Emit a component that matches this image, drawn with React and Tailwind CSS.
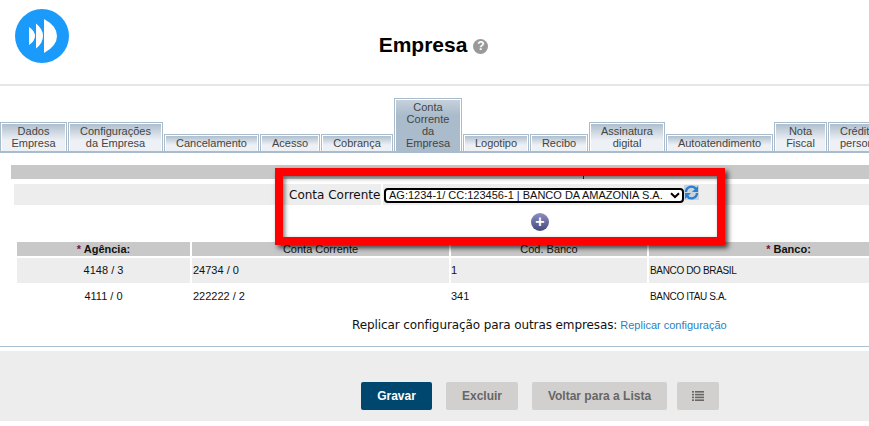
const sans = "font-['Liberation_Sans',Arial,sans-serif]";
const dejavu = "font-['DejaVu_Sans',Verdana,sans-serif]";

const tabs = [
  { label: ["Dados", "Empresa"], width: "w-[67px]" },
  { label: ["Configurações", "da Empresa"], width: "w-[95px]" },
  { label: ["Cancelamento"], width: "w-[95px]" },
  { label: ["Acesso"], width: "w-[60px]" },
  { label: ["Cobrança"], width: "w-[72px]" },
  { label: ["Conta", "Corrente", "da", "Empresa"], width: "w-[68px]", active: true },
  { label: ["Logotipo"], width: "w-[66px]" },
  { label: ["Recibo"], width: "w-[58px]" },
  { label: ["Assinatura", "digital"], width: "w-[76px]" },
  { label: ["Autoatendimento"], width: "w-[107px]" },
  { label: ["Nota", "Fiscal"], width: "w-[53px]" },
  { label: ["Crédito", "personalizado"], width: "w-[94px]", left: true },
];

const rows = [
  { agencia: "4148 / 3", conta: "24734 / 0", cod: "1", banco: "BANCO DO BRASIL", shaded: true },
  { agencia: "4111 / 0", conta: "222222 / 2", cod: "341", banco: "BANCO ITAU S.A." },
];

const gridCols = "grid w-[911px] grid-cols-[173px_257px_196px_279px] gap-x-[2px]";

function Logo() {
  return (
    <svg width="54" height="54" viewBox="0 0 54 54">
      <circle cx="27" cy="27" r="27" fill="#1a9bfc" />
      <path d="M29 10 Q42 17 42 27 Q42 37 29 44 Z" fill="#fff" />
      <path d="M21 14.5 Q28 20 28 27 Q28 34 21 39.5 Z" fill="#fff" />
      <path d="M14 18 Q20 22 20 27 Q20 32 14 36 Z" fill="#fff" />
    </svg>
  );
}

function Tab({ tab }) {
  return (
    <div className={`${tab.width} shrink-0 border border-b-0 border-[#a9bccd] p-px pb-0 ${sans}`}>
      <div
        className={`pb-[2px] pt-px text-[11px] leading-[12px] text-[#444] ${
          tab.left ? "pl-[10px] text-left" : "text-center"
        } ${
          tab.active
            ? "bg-gradient-to-b from-[#c6d1dc] to-[#aabbcb] to-[30%]"
            : "bg-gradient-to-b from-[#afbfce] to-[#edf0f4] to-[60%]"
        }`}
      >
        {tab.label.map((line) => (
          <div key={line} className="whitespace-nowrap">
            {line}
          </div>
        ))}
      </div>
    </div>
  );
}

export default function App() {
  return (
    <div className={`relative h-[426px] w-[869px] overflow-hidden bg-white ${sans}`}>
      <header className="relative flex h-[86px] items-start justify-center border-b-2 border-[#e6e6e6]">
        <div className="absolute left-[15px] top-[9px]">
          <Logo />
        </div>
        <div className="mr-[2px] mt-[33px] flex items-center gap-[6px]">
          <h1 className="text-[21px] font-bold leading-[24px] text-black">Empresa</h1>
          <span className="mt-[2px] flex h-[15px] w-[15px] items-center justify-center rounded-full bg-[#999] text-[12px] font-bold leading-none text-white">
            ?
          </span>
        </div>
      </header>

      <div className="flex h-[67px] items-end gap-[1px] border-b-2 border-[#a9bccd]">
        {tabs.map((tab) => (
          <Tab key={tab.label.join(" ")} tab={tab} />
        ))}
      </div>

      <div className="ml-[11px] mt-[12px] flex h-[14px] items-end bg-[#c8c8c8] pl-[572px]">
        <div className="h-[3px] w-px bg-[#222]" />
      </div>
      <div className="ml-[14px] mt-[5px] flex h-[21px] bg-[#ededed] pl-[275px]">
        <span className={`${dejavu} w-[92px] whitespace-nowrap pt-px text-[12px] leading-[21px] text-[#111]`}>
          Conta Corrente
        </span>
        <div className="h-full w-[2px] bg-white" />
        <div className="ml-px mt-[4px] flex h-[15px] w-[300px] items-center justify-between rounded-[4px] border-2 border-black bg-white pl-[3px] pr-[2px] text-[11px] text-[#111]">
          <span className="whitespace-nowrap">AG:1234-1/ CC:123456-1 | BANCO DA AMAZONIA S.A.</span>
          <svg width="10" height="7" viewBox="0 0 10 7">
            <path d="M1 1.2 L5 5 L9 1.2" fill="none" stroke="#000" strokeWidth="2" />
          </svg>
        </div>
        <svg className="mt-px" width="15" height="15" viewBox="0 0 15 15">
          <rect width="15" height="15" fill="#c9d3dc" />
          <path d="M2 7 A5.5 5.5 0 0 1 12 4" fill="none" stroke="#2a7fd0" strokeWidth="2.4" />
          <path d="M13 8 A5.5 5.5 0 0 1 3 11" fill="none" stroke="#2a7fd0" strokeWidth="2.4" />
          <path d="M14 1 V7 H8 Z M1 14 V8 H7 Z" fill="#2a7fd0" />
        </svg>
      </div>

      <div className="mt-[8px] flex justify-center pl-[211px]">
        <span className="flex h-[18px] w-[18px] items-center justify-center rounded-full bg-gradient-to-b from-[#8d8fc0] to-[#464a80] text-[16px] font-bold leading-none text-white">
          +
        </span>
      </div>

      <div className="ml-[17px] mt-[11px] text-[11px] text-[#111]">
        <div className={`${gridCols} h-[14px] leading-[14px]`}>
          <div className="bg-[#c8c8c8] text-center font-bold">
            <span className="text-[#7a1040]">*</span> Agência:
          </div>
          <div className="bg-[#c8c8c8] text-center">Conta Corrente</div>
          <div className="bg-[#c8c8c8] text-center">Cod. Banco</div>
          <div className="bg-[#c8c8c8] text-center font-bold">
            <span className="text-[#7a1040]">*</span> Banco:
          </div>
        </div>
        {rows.map((row) => (
          <div key={row.agencia} className={`${gridCols} mt-[2px] h-[24px] leading-[25px]`}>
            <div className={`text-center ${row.shaded ? "bg-[#ededed]" : ""}`}>{row.agencia}</div>
            <div className={`pl-px ${row.shaded ? "bg-[#ededed]" : ""}`}>{row.conta}</div>
            <div className={`${row.shaded ? "bg-[#ededed]" : ""}`}>{row.cod}</div>
            <div className={`pl-px text-[10px] tracking-[-0.35px] ${row.shaded ? "bg-[#ededed]" : ""}`}>{row.banco}</div>
          </div>
        ))}
      </div>

      <div className="mt-[9px] flex h-[16px] items-center pl-[352px]">
        <span className={`${dejavu} text-[12px] tracking-[-0.1px] text-[#111]`}>
          Replicar configuração para outras empresas:
        </span>
        <a className="ml-[3px] text-[11px] text-[#2a7fc4]">Replicar configuração</a>
      </div>

      <div className="mt-[13px] border-t border-[#a9bfd0] pt-[4px]">
        <div className="flex h-[70px] items-start gap-[14px] bg-[#ededed] pl-[361px] pt-[31px]">
          <button className="h-[28px] w-[71px] rounded-[2px] bg-[#00476f] text-[12px] font-bold text-white">
            Gravar
          </button>
          <button className="h-[28px] w-[72px] rounded-[2px] bg-[#d2d0cf] text-[12px] font-bold text-[#666]">
            Excluir
          </button>
          <button className="h-[28px] w-[135px] rounded-[2px] bg-[#d2d0cf] text-[12px] font-bold text-[#666]">
            Voltar para a Lista
          </button>
          <button className="-ml-[4px] flex h-[28px] w-[42px] items-center justify-center rounded-[2px] bg-[#d2d0cf]">
            <svg width="12" height="10" viewBox="0 0 12 10" fill="#666">
              <rect y="0" width="2" height="1.6" />
              <rect x="3" y="0" width="9" height="1.6" />
              <rect y="2.8" width="2" height="1.6" />
              <rect x="3" y="2.8" width="9" height="1.6" />
              <rect y="5.6" width="2" height="1.6" />
              <rect x="3" y="5.6" width="9" height="1.6" />
              <rect y="8.4" width="2" height="1.6" />
              <rect x="3" y="8.4" width="9" height="1.6" />
            </svg>
          </button>
        </div>
      </div>

      {/* annotation drawn over the page */}
      <div className="pointer-events-none absolute left-[275px] top-[168px] h-[77px] w-[450px] border-[8px] border-[#ff0000] shadow-[3px_3px_5px_rgba(0,0,0,0.7),inset_2px_2px_4px_rgba(0,0,0,0.5)]" />
    </div>
  );
}
